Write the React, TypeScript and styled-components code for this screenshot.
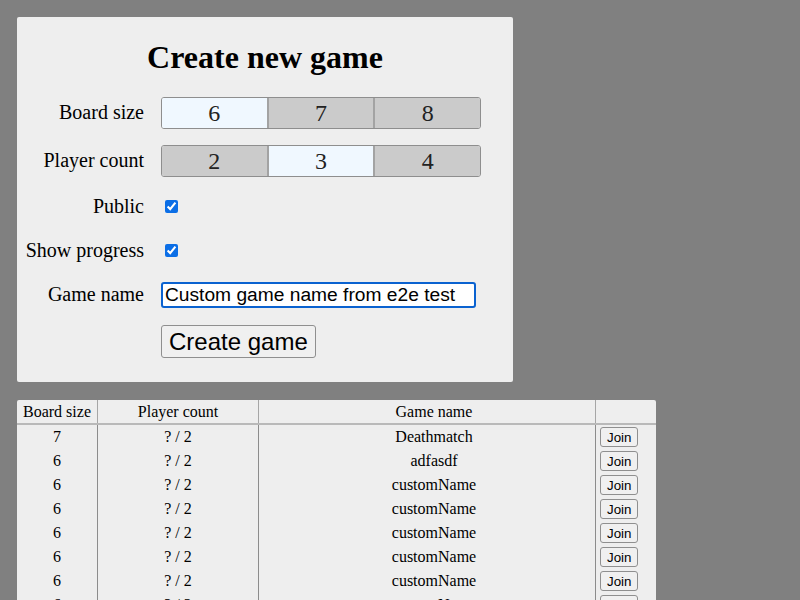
import React, { useState } from "react";
import styled, { createGlobalStyle } from "styled-components";

const GlobalStyle = createGlobalStyle`
    html, body {
        margin: 0;
        padding: 0;
        background: #808080;
        font-family: "Liberation Serif", "Times New Roman", serif;
        color: #000;
    }
`;

const Page = styled.div`
    padding: 17px;
    display: flex;
    flex-direction: column;
    align-items: flex-start;
    gap: 18px;
`;

const Panel = styled.div`
    width: 496px;
    box-sizing: border-box;
    background: #eee;
    border-radius: 2px;
    padding: 22px 0 24px 0;
`;

const Title = styled.h1`
    margin: 0 0 21px;
    font-size: 32px;
    line-height: 37px;
    font-weight: bold;
    text-align: center;
`;

const Form = styled.div`
    display: flex;
    flex-direction: column;
    gap: 16px;
`;

const Row = styled.div<{ $h: number }>`
    display: grid;
    grid-template-columns: 127px 1fr;
    column-gap: 17px;
    align-items: center;
    height: ${p => p.$h}px;
`;

const Label = styled.label`
    font-size: 20px;
    text-align: right;
    margin-top: -2px;
`;

const Group = styled.div`
    display: flex;
    width: 320px;
    height: 32px;
    border-radius: 3px;
    overflow: hidden;
    border: 1px solid #8e8e8e;
    box-sizing: border-box;
`;

const Choice = styled.button<{ $active: boolean }>`
    flex: 1;
    margin: 0;
    padding: 0;
    border: none;
    border-left: 2px solid #a3a3a3;
    background: ${p => (p.$active ? "#f0f8ff" : "#cbcbcb")};
    font-family: "Liberation Serif", "Times New Roman", serif;
    font-size: 24px;
    color: #222;
    cursor: pointer;

    &:first-child {
        border-left: none;
    }
`;

const Check = styled.input`
    width: 13px;
    height: 13px;
    margin: 3px 3px 3px 4px;
    accent-color: #0b6ee6;
`;

const NameInput = styled.input`
    width: 315px;
    height: 26px;
    box-sizing: border-box;
    margin: 0;
    padding: 1px 2px;
    border: 2px solid #0a62d0;
    border-radius: 3px;
    background: #fff;
    font-family: "Liberation Sans", Arial, sans-serif;
    font-size: 19.2px;
    color: #000;
    outline: none;
`;

const CreateButton = styled.button`
    justify-self: start;
    height: 33px;
    margin: 0;
    padding: 1px 7px;
    border: 1px solid #8f8f8f;
    border-radius: 3px;
    background: #f0f0f0;
    font-family: "Liberation Sans", Arial, sans-serif;
    font-size: 24px;
    color: #000;
`;

const Table = styled.table`
    width: 639px;
    table-layout: fixed;
    border-collapse: collapse;
    background: #eee;
    font-size: 16px;
    border-radius: 2px;
`;

const Th = styled.th<{ $w?: number; $pad?: number }>`
    width: ${p => (p.$w ? `${p.$w}px` : "auto")};
    height: 23px;
    padding: 0 0 0 ${p => p.$pad ?? 0}px;
    font-weight: normal;
    text-align: center;
    border-bottom: 2px solid #b9b9b9;
    border-left: 1px solid #a6a6a6;

    &:first-child {
        border-left: none;
    }
`;

const Td = styled.td<{ $left?: boolean; $pad?: number }>`
    height: 24px;
    padding: 0 0 0 ${p => (p.$left ? 4 : p.$pad ?? 0)}px;
    text-align: ${p => (p.$left ? "left" : "center")};
    border-left: 1px solid #8c8c8c;
    vertical-align: middle;

    &:first-child {
        border-left: none;
    }
`;

const JoinButton = styled.button`
    height: 20px;
    margin: 0;
    padding: 0 6px;
    border: 1px solid #8f8f8f;
    border-radius: 3px;
    background: #f0f0f0;
    font-family: "Liberation Sans", Arial, sans-serif;
    font-size: 13.33px;
    color: #000;
    vertical-align: middle;
`;

const games = [
    { size: 7, name: "Deathmatch" },
    { size: 6, name: "adfasdf" },
    { size: 6, name: "customName" },
    { size: 6, name: "customName" },
    { size: 6, name: "customName" },
    { size: 6, name: "customName" },
    { size: 6, name: "customName" },
    { size: 6, name: "customName" },
    { size: 6, name: "customName" },
];

const ChoiceGroup: React.FC<{ options: number[]; value: number; onChange: (v: number) => void }> = ({ options, value, onChange }) => (
    <Group>
        {options.map(o => (
            <Choice key={o} $active={o === value} onClick={() => onChange(o)}>{o}</Choice>
        ))}
    </Group>
);

export default function App() {
    const [size, setSize] = useState(6);
    const [players, setPlayers] = useState(3);
    const [isPublic, setPublic] = useState(true);
    const [progress, setProgress] = useState(true);
    const [name, setName] = useState("Custom game name from e2e test");

    return <>
        <GlobalStyle />
        <Page>
            <Panel>
                <Title>Create new game</Title>
                <Form>
                    <Row $h={32}>
                        <Label>Board size</Label>
                        <ChoiceGroup options={[6, 7, 8]} value={size} onChange={setSize} />
                    </Row>
                    <Row $h={32}>
                        <Label>Player count</Label>
                        <ChoiceGroup options={[2, 3, 4]} value={players} onChange={setPlayers} />
                    </Row>
                    <Row $h={28}>
                        <Label>Public</Label>
                        <div><Check type="checkbox" checked={isPublic} onChange={e => setPublic(e.target.checked)} /></div>
                    </Row>
                    <Row $h={28}>
                        <Label>Show progress</Label>
                        <div><Check type="checkbox" checked={progress} onChange={e => setProgress(e.target.checked)} /></div>
                    </Row>
                    <Row $h={28}>
                        <Label>Game name</Label>
                        <NameInput value={name} onChange={e => setName(e.target.value)} />
                    </Row>
                    <Row $h={33}>
                        <span />
                        <CreateButton>Create game</CreateButton>
                    </Row>
                </Form>
            </Panel>
            <Table>
                <thead>
                    <tr>
                        <Th $w={80}>Board size</Th>
                        <Th $w={160}>Player count</Th>
                        <Th $w={322} $pad={14}>Game name</Th>
                        <Th></Th>
                    </tr>
                </thead>
                <tbody>
                    {games.map((g, i) => (
                        <tr key={i}>
                            <Td>{g.size}</Td>
                            <Td>? / 2</Td>
                            <Td $pad={14}>{g.name}</Td>
                            <Td $left><JoinButton>Join</JoinButton></Td>
                        </tr>
                    ))}
                </tbody>
            </Table>
        </Page>
    </>;
}
